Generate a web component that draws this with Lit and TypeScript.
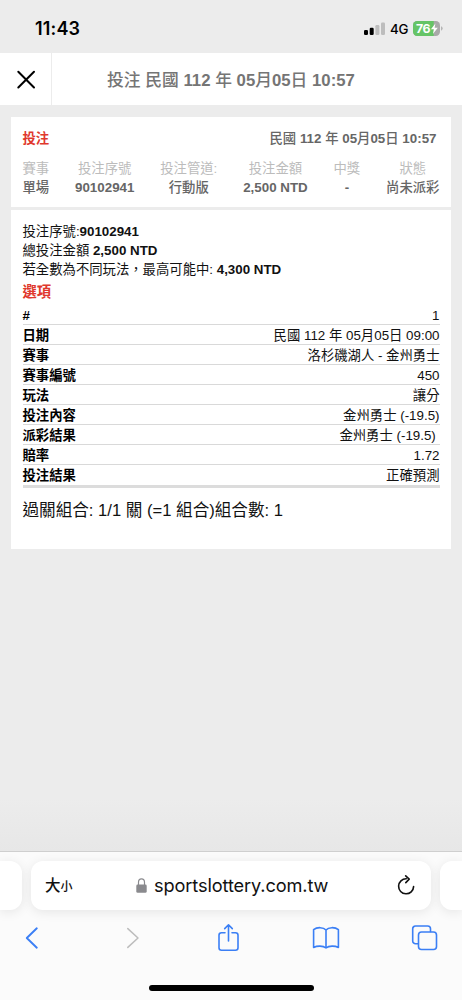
import { LitElement, html, css } from "lit";
import { customElement, property } from "lit/decorators.js";

const summary: [string, string][] = [
  ["賽事", "單場"],
  ["投注序號", "90102941"],
  ["投注管道:", "行動版"],
  ["投注金額", "2,500 NTD"],
  ["中獎", "-"],
  ["狀態", "尚未派彩"],
];

const details: [string, string][] = [
  ["#", "1"],
  ["日期", "民國 112 年 05月05日 09:00"],
  ["賽事", "洛杉磯湖人 - 金州勇士"],
  ["賽事編號", "450"],
  ["玩法", "讓分"],
  ["投注內容", "金州勇士 (-19.5)"],
  ["派彩結果", "金州勇士 (-19.5)\u00a0"],
  ["賠率", "1.72"],
  ["投注結果", "正確預測"],
];

// Sets Han runs in the medium weight while Latin runs stay bold.
const mixed = (text: string) =>
  text
    .split(/([\u4e00-\u9fff]+)/)
    .filter((part) => part)
    .map((part) => (/[\u4e00-\u9fff]/.test(part) ? html`<span class="han">${part}</span>` : part));

@customElement("status-bar")
class StatusBar extends LitElement {
  static styles = css`
    :host { display: flex; align-items: center; height: 53px; box-sizing: border-box; padding: 4px 19px 0 35px; font-family: Inter, "Noto Sans", sans-serif; color: #000; }
    .time { flex: 1; font-size: 18px; font-weight: 600; line-height: 22px; letter-spacing: 0.15px; }
    .signal { width: 21px; height: 13px; margin-right: 5px; }
    .net { width: 18px; font-size: 13.3px; font-weight: 500; line-height: 18px; letter-spacing: -0.2px; margin-right: 5px; white-space: nowrap; }
    .battery { display: grid; align-items: center; width: 30px; height: 15px; margin-bottom: 1px; }
    .battery > * { grid-area: 1 / 1; }
    .pct { font-size: 12.3px; font-weight: 700; line-height: 15px; color: #fff; padding-left: 3px; letter-spacing: -0.4px; }
    svg { display: block; }
  `;
  render() {
    return html`
      <span class="time">11:43</span>
      <svg class="signal" viewBox="0 0 21 13">
        <rect x="0" y="8" width="4" height="5" rx="1.2" fill="#000" />
        <rect x="5.7" y="5.8" width="4" height="7.2" rx="1.2" fill="#000" />
        <rect x="11.4" y="3" width="4" height="10" rx="1.2" fill="#bdbdbd" />
        <rect x="17" y="0.4" width="4" height="12.6" rx="1.2" fill="#bdbdbd" />
      </svg>
      <span class="net">4G</span>
      <div class="battery">
        <svg width="30" height="15" viewBox="0 0 30 15">
          <defs><clipPath id="b"><rect width="27" height="15" rx="4.2" /></clipPath></defs>
          <g clip-path="url(#b)"><rect width="27" height="15" fill="#a9a9a9" /><rect width="20.7" height="15" fill="#65c466" /></g>
          <path d="M28 5.3q1.7.6 1.7 2.2T28 9.7z" fill="#b5b5b5" />
          <path d="M22.4 2.4 17.9 8.3h3l-1 4.7 4.9-6.3h-3.2z" fill="#fff" />
        </svg>
        <span class="pct">76</span>
      </div>
    `;
  }
}

@customElement("title-bar")
class TitleBar extends LitElement {
  @property() heading = "";
  static styles = css`
    :host { display: flex; height: 52px; background: #fff; font-family: "Liberation Sans", "Noto Sans CJK TC", sans-serif; }
    .close { display: grid; place-items: center; width: 52px; box-sizing: border-box; border-right: 1px solid #ececec; }
    .title { flex: 1; padding-right: 52px; text-align: center; font-size: 16.75px; font-weight: 700; line-height: 55px; color: #757575; white-space: nowrap; }
    .han { font-weight: 500; }
  `;
  render() {
    return html`
      <div class="close">
        <svg width="20" height="20" viewBox="0 0 20 20"><path d="M2.3 2.8 18 18.5M18 2.8 2.3 18.5" stroke="#000" stroke-width="2" stroke-linecap="round" /></svg>
      </div>
      <div class="title">${mixed(this.heading)}</div>
    `;
  }
}

@customElement("bet-card")
class BetCard extends LitElement {
  static styles = css`
    :host { display: block; height: 432px; margin: 12px 11px 0; background: #fff; font-family: "Liberation Sans", "Noto Sans CJK TC", sans-serif; font-size: 13.35px; color: #111; white-space: nowrap; }
    .head { height: 93px; box-sizing: border-box; padding: 12px 11.5px 0; border-bottom: 3px solid #ececec; color: #666; font-weight: 700; }
    .top { display: flex; justify-content: space-between; line-height: 20px; padding-right: 3px; }
    .red { color: #e0382d; font-weight: 700; }
    .cols { display: flex; justify-content: space-between; padding-top: 10px; }
    .col { text-align: center; line-height: 19px; }
    .label { color: #bcbcbc; font-weight: 400; }
    .han { font-weight: 500; }
    .body { padding: 12px 11.5px 0; }
    .line { line-height: 19px; }
    .options { font-size: 14.3px; line-height: 27px; height: 25.6px; }
    .row { display: flex; justify-content: space-between; height: 20.1px; box-sizing: border-box; border-bottom: 1px solid #d9d9d9; line-height: 22px; }
    .row:last-child { border-bottom: 3px solid #dcdcdc; height: 22.6px; }
    .key { font-weight: 700; color: #000; }
    .combo { font-size: 16.6px; line-height: 24px; padding-top: 11px; }
  `;
  render() {
    return html`
      <div class="head">
        <div class="top"><span class="red">投注</span><span>${mixed("民國 112 年 05月05日 10:57")}</span></div>
        <div class="cols">
          ${summary.map(([k, v]) => html`<div class="col"><div class="label">${k}</div><div>${mixed(v)}</div></div>`)}
        </div>
      </div>
      <div class="body">
        <div class="line">投注序號:<b>90102941</b></div>
        <div class="line">總投注金額 <b>2,500 NTD</b></div>
        <div class="line">若全數為不同玩法，最高可能中: <b>4,300 NTD</b></div>
        <div class="options red">選項</div>
        <div class="table">
          ${details.map(([k, v]) => html`<div class="row"><span class="key">${k}</span><span>${v}</span></div>`)}
        </div>
        <div class="combo">過關組合: 1/1 關 (=1 組合)組合數: 1</div>
      </div>
    `;
  }
}

@customElement("browser-bar")
class BrowserBar extends LitElement {
  static styles = css`
    :host { display: flex; flex-direction: column; height: 149px; box-sizing: border-box; border-top: 1px solid #cfcfcf; background: #fbfbfb; overflow: hidden; font-family: Inter, "Noto Sans CJK TC", sans-serif; }
    .tabs { display: grid; grid-template-columns: 22px 400px 22px; column-gap: 9px; height: 49px; margin-top: 9px; }
    .tab { background: #fff; border-radius: 12px; box-shadow: 0 2px 12px rgba(0, 0, 0, 0.09); }
    .prev { border-radius: 0 12px 12px 0; }
    .next { border-radius: 12px 0 0 12px; }
    .address { display: flex; align-items: center; padding: 0 16px 1px 14px; box-sizing: border-box; color: #111; }
    .aa { display: flex; align-items: baseline; width: 91px; font-weight: 500; line-height: 24px; padding-top: 2px; }
    .big { font-size: 15.5px; }
    .small { font-size: 12px; }
    .url { flex: 1; font-size: 18.2px; line-height: 24px; padding-left: 7px; letter-spacing: -0.12px; white-space: nowrap; }
    .tools { display: flex; justify-content: space-between; align-items: center; height: 32px; margin-top: 12px; padding: 0 24px 0 18px; color: #3b7ff5; }
    .home { width: 165px; height: 6px; margin: 31px auto 0; border-radius: 3px; background: #000; }
    .off { color: #bdbdbd; }
    svg { display: block; fill: none; stroke: currentColor; stroke-width: 1.6; stroke-linecap: round; stroke-linejoin: round; }
  `;
  render() {
    return html`
      <div class="tabs">
        <div class="tab prev"></div>
        <div class="tab address">
          <div class="aa"><span class="big">大</span><span class="small">小</span></div>
          <svg width="11" height="15" viewBox="0 0 11 15" color="#8a8a8e">
            <rect x="0.3" y="6.6" width="10.4" height="8.2" rx="1.4" fill="currentColor" stroke="none" />
            <path d="M2.5 7V4.2a3 3.4 0 0 1 6 0V7" stroke-width="1.2" />
          </svg>
          <span class="url">sportslottery.com.tw</span>
          <svg width="18" height="21" viewBox="0 0 18 21">
            <path d="M9.3 3.8A7.5 7.5 0 1 0 16.6 11.6" stroke-width="1.6" />
            <path d="M8.7.9 12.2 4.1 8.8 7.6" stroke-width="1.6" />
          </svg>
        </div>
        <div class="tab next"></div>
      </div>
      <div class="tools">
        <svg width="28" height="24" viewBox="0 0 28 24"><path d="M18.8 2.3 8.8 12 18.8 21.7" stroke-width="1.9" /></svg>
        <svg class="off" width="28" height="24" viewBox="0 0 28 24"><path d="M11.8 2.6 22 12 11.8 21.4" stroke-width="1.5" /></svg>
        <svg width="28" height="30" viewBox="0 0 28 30"><path d="M11 9.8H7.5A2.5 2.5 0 0 0 5 12.3v12.5a2.5 2.5 0 0 0 2.5 2.5h14a2.5 2.5 0 0 0 2.5-2.5V12.3a2.5 2.5 0 0 0-2.5-2.5H18M14.5 18V1.8M10.7 5.6 14.5 1.8l3.8 3.8" /></svg>
        <svg width="28" height="24" viewBox="0 0 28 24"><path d="M14 4C11.5 1 5 .9 1.6 3.7V21.5C5 19.7 11 19.5 14 22 17 19.5 23 19.7 26.4 21.5V3.7C23 .9 16.5 1 14 4ZM14 4V22" /></svg>
        <svg width="28" height="26" viewBox="0 0 28 26"><rect x="8.5" y="7" width="18" height="17.5" rx="3" /><path d="M8 18.7H5.5A2.8 2.8 0 0 1 2.7 15.9V3.8A2.8 2.8 0 0 1 5.5 1H17.7A2.8 2.8 0 0 1 20.5 3.8V6.5" /></svg>
      </div>
      <div class="home"></div>
    `;
  }
}

@customElement("app-root")
class AppRoot extends LitElement {
  static styles = css`
    :host { display: flex; flex-direction: column; width: 462px; height: 1000px; background: #ececec; overflow: hidden; }
    .content { flex: 1; background: linear-gradient(#ececec 93%, #e7e7e7); }
  `;
  render() {
    return html`
      <status-bar></status-bar>
      <title-bar heading="投注 民國 112 年 05月05日 10:57"></title-bar>
      <div class="content"><bet-card></bet-card></div>
      <browser-bar></browser-bar>
    `;
  }
}
